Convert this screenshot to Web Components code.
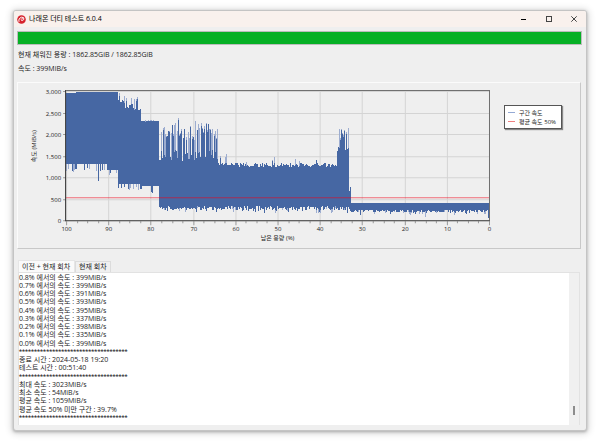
<!DOCTYPE html>
<html lang="ko">
<head>
<meta charset="utf-8">
<meta name="viewport" content="width=device-width, initial-scale=1">
<title>나래온 더티 테스트 6.0.4</title>
<style>
  body {
    margin: 0;
    background: #fff;
    color: #1c1c1c;
    font: 7px/8px "Open Sans", "Noto Sans CJK KR", sans-serif;
  }
</style>
</head>
<body>
<app-window caption="나래온 더티 테스트 6.0.4">
  <test-progress value="100">
    <span slot="filled">현재 채워진 용량 : 1862.85GiB / 1862.85GiB</span>
    <span slot="speed">속도 : 399MiB/s</span>
  </test-progress>
  <speed-chart average="529"></speed-chart>
  <log-tabs>
    <span slot="all">이전 + 현재 회차</span>
    <span slot="current">현재 회차</span>
    <test-log></test-log>
  </log-tabs>
</app-window>

<script>
customElements.define('app-window', class extends HTMLElement {
  constructor() {
    super()
    this.attachShadow({ mode: 'open' }).innerHTML = `
    <style>
    :host {
      box-sizing: border-box;
      min-height: 100vh;
      padding: 10px 13px 11px;
      display: flex;
    }
    .window {
      flex: 1;
      min-width: 0;
      display: flex;
      flex-direction: column;
      box-sizing: border-box;
      border: 1px solid #c4c4c4;
      border-radius: 3px;
      overflow: hidden;
      background: #efefef;
      box-shadow: 0 1px 3px #aaa, 0 1px 7px 2px #ddd;
    }
    header {
      display: flex;
      align-items: center;
      height: 16px;
      padding-left: 3px;
      background: #f9f1ed;
    }
    h1 {
      flex: 1;
      margin: 0 0 0 3px;
      font-size: 7px;
      font-weight: 400;
      color: #000;
    }
    button {
      display: flex;
      align-items: center;
      justify-content: center;
      width: 25px;
      height: 16px;
      padding: 0;
      border: 0;
      background: none;
    }
    svg {
      display: block;
      fill: none;
      stroke: #222;
    }
    main {
      flex: 1;
      display: flex;
      flex-direction: column;
      padding: 4px 4px 5px 3px;
    }
    </style>
    <div class="window">
      <header>
        <svg width="9" height="9" viewBox="0 0 9 9" aria-hidden="true">
          <circle cx="4.5" cy="4.5" r="4.3" fill="#d6222c" stroke="none"/>
          <path d="M2 6.8Q1.2 3.2 4.6 2.2Q7.4 2 6.9 4.3Q6 6 4.2 5.3" stroke="#fff" stroke-width="1"/>
          <path d="M3.6 4.2L6.2 3.6" stroke="#fff" stroke-width=".8"/>
        </svg>
        <h1></h1>
        <button aria-label="최소화"><svg width="6" height="6"><path d="M0 3.5H5" stroke="#000"/></svg></button>
        <button aria-label="최대화"><svg width="6" height="6"><rect x=".5" y=".5" width="5" height="5" stroke="#444"/></svg></button>
        <button aria-label="닫기"><svg width="6" height="6"><path d="M.3 .3L5.7 5.7M5.7 .3L.3 5.7" stroke="#444"/></svg></button>
      </header>
      <main><slot></slot></main>
    </div>
    `
    this.shadowRoot.querySelector('h1').textContent = this.getAttribute('caption')
  }
})

customElements.define('test-progress', class extends HTMLElement {
  constructor() {
    super()
    this.attachShadow({ mode: 'open' }).innerHTML = `
    <style>
    :host {
      display: block;
    }
    progress {
      appearance: none;
      display: block;
      box-sizing: border-box;
      width: 100%;
      height: 14px;
      border: 1px solid #bcbcbc;
      background: #e6e6e6;
    }
    progress::-webkit-progress-bar {
      background: #e6e6e6;
    }
    progress::-webkit-progress-value {
      background: #06b025;
    }
    p {
      margin: 6px 1px 0;
    }
    </style>
    <progress max="100" aria-label="진행률"></progress>
    <p><slot name="filled"></slot></p>
    <p><slot name="speed"></slot></p>
    `
    this.shadowRoot.querySelector('progress').value = this.getAttribute('value')
  }
})

// Ranges of the run, in pixels of the plot:
// [from, to, top, top jitter, peak, peak chance, bottom, bottom jitter, dip, dip chance]
const RANGES = [
  [0, 10, 2, 0, 0, 0, 73, 1, 8, .4],
  [10, 42, 1, 0, 0, 0, 73, 1, 8, .35],
  [42, 52, 1, 0, 0, 0, 79, 1, 6, .4],
  [52, 59, 9, 7, 7, .5, 93, 1, 6, .4],
  [59, 67, 15, 5, 10, .5, 93, 1, 6, .3],
  [67, 75, 18, 2, 12, .4, 93, 1, 6, .3],
  [75, 93, 30, 1, 1, .2, 95, 1, 7, .1],
  [93, 152, 65, 12, 32, .75, 117, 4, 4, .3],
  [152, 162, 73, 3, 10, .3, 117, 3, 4, .3],
  [162, 270, 74, 4, 6, .1, 117, 4, 4, .2],
  [270, 282, 59, 7, 24, .55, 117, 4, 4, .2],
  [282, 284, 98, 6, 0, 0, 119, 3, 0, 0],
  [284, 422, 112, 0, 0, 0, 120, 3, 3, .2]
]
const LEFT = 48
const TOP = 8
const WIDTH = 422
const HEIGHT = 129

customElements.define('speed-chart', class extends HTMLElement {
  constructor() {
    super()
    this.attachShadow({ mode: 'open' }).innerHTML = `
    <style>
    :host {
      display: flex;
      align-items: flex-start;
      box-sizing: border-box;
      margin: 9px 1px 0 0;
      padding-right: 18px;
      border: 1px solid;
      border-color: #fbfbfb #c8c8c8 #c8c8c8 #fbfbfb;
    }
    svg {
      flex: 1;
      min-width: 0;
      font-size: 6px;
      fill: #222;
    }
    .grid { stroke: #d4d4d4; }
    .tick { stroke: #999; }
    .faint { fill: #9dadd0; }
    .solid { fill: #4667a3; }
    ul {
      box-sizing: border-box;
      min-width: 58px;
      margin: 22px 0 0 8px;
      padding: 2px 3px;
      border: 1px solid #555;
      box-shadow: 1px 1px 1px #888;
      background: #fff;
      list-style: none;
      font-size: 6px;
      white-space: nowrap;
    }
    li {
      display: flex;
      align-items: center;
      gap: 4px;
      height: 9px;
    }
    li::before {
      content: "";
      width: 7px;
      height: 1px;
      background: #94a9d4;
    }
    li + li::before {
      background: #f08080;
    }
    </style>
    <svg viewBox="0 0 477 165" role="img" aria-label="속도 그래프"></svg>
    <ul><li>구간 속도</li><li>평균 속도 50%</li></ul>
    `
    this.draw()
  }

  draw() {
    let seed = 7
    const random = () => {
      seed = (seed * 16807) % 2147483647
      return seed / 2147483647
    }
    const bottom = TOP + HEIGHT
    const right = LEFT + WIDTH
    let out = ''

    for (let i = 0; i <= 6; i++) {
      const y = Math.round(bottom - i * HEIGHT / 6) + .5
      if (i > 0) out += `<path class="grid" d="M${LEFT} ${y}H${right}"/>`
      out += `<path class="tick" d="M${LEFT - 3} ${y}h3"/>`
      out += `<text x="${LEFT - 5}" y="${y + 2}" text-anchor="end">${(i * 500).toLocaleString('en-US')}</text>`
    }
    for (let i = 0; i <= 40; i++) {
      const x = Math.round(LEFT + i * WIDTH / 40) + .5
      const major = i % 4 === 0
      out += `<path class="tick" d="M${x} ${bottom + 1}v${major ? 4 : 2}"/>`
      if (!major) continue
      out += `<path class="grid" d="M${x} ${TOP}V${bottom}"/>`
      out += `<text x="${x}" y="${bottom + 11}" text-anchor="middle">${100 - i * 2.5}</text>`
    }

    let faint = ''
    let solid = ''
    for (const [from, to, top, jitter, peak, peakChance, low, lowJitter, dip, dipChance] of RANGES) {
      for (let x = from; x < to; x++) {
        let y1 = top + Math.round((random() - .5) * jitter)
        let y2 = low + Math.round((random() - .5) * lowJitter)
        let f1 = y1
        let f2 = y2
        if (random() < peakChance) {
          f1 -= Math.round(peak * (.6 + random() * .4))
          if (random() < .55) y1 = f1 + Math.round(random() * 3)
        }
        if (random() < dipChance) {
          f2 += Math.round(dip * (.4 + random() * .6))
          if (random() < .5) y2 = f2
        }
        if (x === 32) y2 = f2 = 90
        if (x === 358) f2 = 126
        if (x === 421) y2 = f2 = 127
        faint += `M${LEFT + x} ${TOP + f1}h1V${TOP + f2}h-1z`
        solid += `M${LEFT + x} ${TOP + y1}h1V${TOP + y2}h-1z`
      }
    }
    out += `<g shape-rendering="crispEdges"><path class="faint" d="${faint}"/><path class="solid" d="${solid}"/></g>`

    const average = Math.round(bottom - this.getAttribute('average') / 3000 * HEIGHT)
    out += `<path d="M${LEFT} ${average + .5}H${right}" stroke="#f00018" stroke-opacity=".55"/>`
    out += `<path d="M${LEFT} ${TOP - .5}H${right + .5}V${bottom}" fill="none" stroke="#707070"/>`
    out += `<path d="M${LEFT - .5} ${TOP - 1}V${bottom + .5}H${right + 1}" fill="none" stroke="#333"/>`
    out += `<text x="${LEFT + WIDTH / 2}" y="157" text-anchor="middle">남은 용량 (%)</text>`
    out += `<text transform="translate(18 63) rotate(-90)" text-anchor="middle">속도 (MiB/s)</text>`
    this.shadowRoot.querySelector('svg').innerHTML = out
  }
})

customElements.define('log-tabs', class extends HTMLElement {
  constructor() {
    super()
    this.attachShadow({ mode: 'open' }).innerHTML = `
    <style>
    :host {
      flex: 1;
      display: flex;
      flex-direction: column;
      margin: 11px 2px 0 1px;
    }
    nav {
      display: flex;
      align-items: flex-end;
    }
    button {
      height: 11px;
      padding: 0 3px;
      border: 1px solid #dcdcdc;
      border-bottom: 0;
      background: #f0f0f0;
      color: inherit;
      font: inherit;
    }
    button[aria-selected="true"] {
      height: 12px;
      padding: 0 4px 0 3px;
      border-color: #e6e6e6;
      background: #fafafa;
    }
    .panel {
      flex: 1;
      display: flex;
      border: 1px solid #e2e2e2;
      border-bottom: 0;
    }
    </style>
    <nav role="tablist">
      <button role="tab" aria-selected="true"><slot name="all"></slot></button>
      <button role="tab" aria-selected="false"><slot name="current"></slot></button>
    </nav>
    <div class="panel" role="tabpanel"><slot></slot></div>
    `
    const tabs = this.shadowRoot.querySelectorAll('button')
    for (const tab of tabs) {
      tab.onclick = () => {
        for (const other of tabs) other.setAttribute('aria-selected', other === tab)
      }
    }
  }
})

const STARS = '*'.repeat(36)
const LINES = [
  '0.8% 에서의 속도 : 399MiB/s',
  '0.7% 에서의 속도 : 399MiB/s',
  '0.6% 에서의 속도 : 391MiB/s',
  '0.5% 에서의 속도 : 393MiB/s',
  '0.4% 에서의 속도 : 395MiB/s',
  '0.3% 에서의 속도 : 337MiB/s',
  '0.2% 에서의 속도 : 398MiB/s',
  '0.1% 에서의 속도 : 335MiB/s',
  '0.0% 에서의 속도 : 399MiB/s',
  STARS,
  '종료 시간 : 2024-05-18 19:20',
  '테스트 시간 : 00:51:40',
  STARS,
  '최대 속도 : 3023MiB/s',
  '최소 속도 : 54MiB/s',
  '평균 속도 : 1059MiB/s',
  '평균 속도 50% 미만 구간 : 39.7%',
  STARS
]

customElements.define('test-log', class extends HTMLElement {
  constructor() {
    super()
    this.attachShadow({ mode: 'open' }).innerHTML = `
    <style>
    :host {
      flex: 1;
      display: flex;
      background: #fff;
    }
    .lines {
      flex: 1;
      padding-top: 1px;
    }
    p {
      margin: 0;
    }
    p:nth-child(4n) {
      margin-bottom: 1px;
    }
    .stars {
      font-family: Roboto, sans-serif;
    }
    .track {
      display: flex;
      flex-direction: column;
      justify-content: flex-end;
      align-items: center;
      width: 10px;
      padding-bottom: 10px;
      box-sizing: border-box;
      background: #f0f0f0;
    }
    .thumb {
      width: 2px;
      height: 9px;
      background: #8c8c8c;
    }
    </style>
    <div class="lines" role="log" tabindex="0"></div>
    <div class="track"><div class="thumb"></div></div>
    `
    const lines = this.shadowRoot.querySelector('.lines')
    for (const line of LINES) {
      const p = document.createElement('p')
      p.textContent = line
      if (line === STARS) p.className = 'stars'
      lines.appendChild(p)
    }
  }
})
</script>
</body>
</html>
